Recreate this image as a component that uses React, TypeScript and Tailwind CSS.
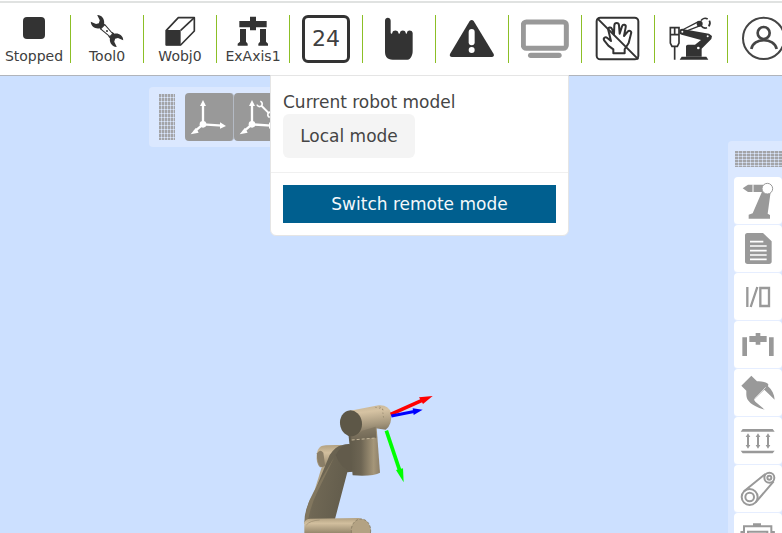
import type { ReactNode } from "react";

const DARK = "#333333";
const GREY = "#999999";

/* ---------- status bar icons ---------- */

const StopIcon = () => (
  <svg viewBox="0 0 144 96" className="h-8 w-12 shrink-0" aria-hidden="true">
    <rect x="39" y="6" width="66" height="66" rx="12" fill={DARK} />
  </svg>
);

const ToolIcon = () => (
  <svg viewBox="0 0 144 96" className="h-8 w-12 shrink-0" aria-hidden="true">
    <g transform="translate(72 48) rotate(44)">
      <path
        d="M-54-14C-45-24-28-20-22-10L-14-9V9L-22 10C-28 20-45 24-54 14L-38 8-34 0-38-8z"
        fill={DARK}
      />
      <path
        d="M54-14C45-24 28-20 22-10L14-9V9L22 10C28 20 45 24 54 14L38 8 34 0 38-8z"
        fill={DARK}
      />
      <path d="M-18-9L18-6V6L-18 9z" fill="#fff" stroke={DARK} strokeWidth="3" />
      <circle cx="0" cy="0" r="3" fill={DARK} />
    </g>
  </svg>
);

const WobjIcon = () => (
  <svg viewBox="0 0 144 96" className="h-8 w-12 shrink-0" aria-hidden="true">
    <path d="M31 46L67 8h48v40L74 90H31z" fill="#fff" stroke={DARK} strokeWidth="5" strokeLinejoin="round" />
    <path d="M29 45h45v46H29z" fill={DARK} />
    <path d="M74 46l41-38" stroke={DARK} strokeWidth="5" />
  </svg>
);

const AxisIcon = () => (
  <svg viewBox="0 0 144 96" className="h-8 w-12 shrink-0" aria-hidden="true">
    <path
      d="M63 5h18v13h32v19H81v9H63v-9H31V18h32zM33 42h18v38l5 6v6H26v-6l7-6zM93 42h18v38l6 6v6H88v-6l5-6z"
      fill={DARK}
    />
  </svg>
);

const HandIcon = () => (
  <svg viewBox="0 0 144 144" className="size-12" aria-hidden="true">
    <path
      d="M30 17c0-12 17-12 17 0v36c0 4 5 4 5 0 1-9 17-9 18 0 0 4 5 4 5 0 1-9 16-9 17 0 0 4 4 4 4 0 1-9 16-8 17 1v54c0 8-2 14-6 20-3 5-8 6-14 6H53c-8 0-15-2-19-8-3-5-4-9-4-17z"
      fill={DARK}
    />
  </svg>
);

const WarningIcon = () => (
  <svg viewBox="0 0 144 144" className="size-12" aria-hidden="true">
    <path d="M65 18q6-6 12 0l60 99q3 8-6 9H12q-9-1-6-9z" fill={DARK} />
    <rect x="62" y="42" width="18" height="49" rx="9" fill="#fff" />
    <circle cx="71" cy="105" r="9" fill="#fff" />
  </svg>
);

const MonitorIcon = () => (
  <svg viewBox="0 0 144 144" className="size-12" aria-hidden="true">
    <rect x="7" y="21" width="129" height="79" rx="9" fill="#fff" stroke={GREY} strokeWidth="15" />
    <rect x="21" y="113" width="101" height="16" rx="8" fill={GREY} />
  </svg>
);

const NoTouchIcon = () => (
  <svg viewBox="0 0 144 144" className="size-12" aria-hidden="true">
    <rect x="8" y="8" width="125" height="125" rx="11" fill="none" stroke={DARK} strokeWidth="6" />
    <path
      d="M58 115V103L43 92 31 77C26 69 34 64 40 69L51 78 43 46C41 37 51 34 54 42L60 58 61 31C62 22 74 22 75 31L77 56 84 34C87 26 97 29 95 37L90 63 101 50C106 44 114 49 111 56L104 84 92 103V115z"
      fill="none"
      stroke={DARK}
      strokeWidth="6"
      strokeLinejoin="round"
    />
    <path d="M10 10l123 123" stroke={DARK} strokeWidth="6" />
  </svg>
);

const RobotIcon = () => (
  <svg viewBox="0 0 144 144" className="size-12" aria-hidden="true">
    <g fill="none" stroke={DARK} strokeWidth="5">
      <path d="M10 38h26v46l-5 10H15l-5-10zM10 59h26M23 38v21M23 94v40" />
      <path d="M40 48l56-29M48 52l52-20" strokeWidth="4" />
    </g>
    <path d="M46 42L126 56 135 63 133 72 104 101V125H57V92L62 89H84L102 75 44 59z" fill={DARK} />
    <path d="M44 125H118L124 134H38z" fill={DARK} />
    <circle cx="46" cy="50" r="9" fill={DARK} />
    <circle cx="98" cy="26" r="9" fill={DARK} />
    <circle cx="122" cy="64" r="3" fill="#fff" />
    <circle cx="94" cy="99" r="4" fill="#fff" />
    <circle cx="46" cy="50" r="3" fill="#fff" />
    <path
      d="M102 17A15 15 0 0 1 122 12M127 17A15 15 0 0 1 125 34M120 38A15 15 0 0 1 103 33"
      fill="none"
      stroke={DARK}
      strokeWidth="5"
    />
  </svg>
);

const UserIcon = () => (
  <svg viewBox="0 0 144 144" className="size-12" aria-hidden="true">
    <g fill="none" stroke="#454545" strokeWidth="6">
      <circle cx="71" cy="70" r="62" />
      <circle cx="71" cy="54" r="18" strokeWidth="8" />
      <path d="M34 102c6-35 69-35 76 0" strokeWidth="8" />
    </g>
  </svg>
);

/* ---------- side toolbar icons ---------- */

const ArmIcon = () => (
  <svg viewBox="0 0 144 144" className="size-12" aria-hidden="true">
    <path d="M26 34l16-11h46v22H42z" fill={GREY} />
    <path d="M57 22v24" stroke="#fff" strokeWidth="3" />
    <path d="M84 44h26l-9 66 7 4v11H44v-12l12-4z" fill={GREY} />
    <circle cx="100" cy="35" r="16" fill="#fff" stroke={GREY} strokeWidth="3" />
  </svg>
);

const DocumentIcon = () => (
  <svg viewBox="0 0 144 144" className="size-12" aria-hidden="true">
    <path d="M40 24h47l26 25v60q0 8-8 8H41q-8 0-8-8V32q0-8 7-8z" fill={GREY} />
    <path d="M48 50h40M48 63h50M48 77h50M48 90h50M48 103h50" stroke="#fff" strokeWidth="5" />
  </svg>
);

const IoIcon = () => (
  <svg viewBox="0 0 144 144" className="size-12" aria-hidden="true">
    <path d="M40 42v60M50 102L70 42M79 45h26v54H79z" fill="none" stroke={GREY} strokeWidth="7" />
  </svg>
);

const SideAxisIcon = () => (
  <svg viewBox="0 0 144 144" className="size-12" aria-hidden="true">
    <path d="M25 49h14v56H25zM105 49h14v56h-14zM46 45h19v-9h14v9h19v18H79v8H65v-8H46z" fill={GREY} />
  </svg>
);

const GripperIcon = () => (
  <svg viewBox="0 0 144 144" className="size-12" aria-hidden="true">
    <path
      d="M22 50L52 20 69 37C82 36 97 39 103 46L102 52C114 62 121 76 122 92L91 62 60 92 64 98 92 122C72 116 54 108 46 98L41 92C36 84 37 74 37 65z"
      fill={GREY}
    />
    <path d="M95 55l-33 34" stroke="#fff" strokeWidth="2" />
  </svg>
);

const ConveyorIcon = () => (
  <svg viewBox="0 0 144 144" className="size-12" aria-hidden="true">
    <path d="M26 36h90l6 8H20zM20 101h102l-6 8H26z" fill={GREY} />
    <path d="M42 55v34M72 55v34M102 55v34" stroke={GREY} strokeWidth="6" />
    <path
      d="M35 60l7-11 7 11zM65 60l7-11 7 11zM95 60l7-11 7 11zM35 84l7 11 7-11zM65 84l7 11 7-11zM95 84l7 11 7-11z"
      fill={GREY}
    />
  </svg>
);

const BeltIcon = () => (
  <svg viewBox="0 0 144 144" className="size-12" aria-hidden="true">
    <g fill="none" stroke={GREY} strokeWidth="6">
      <circle cx="47" cy="96" r="24" />
      <circle cx="47" cy="96" r="13" />
      <circle cx="106" cy="38" r="15" />
      <circle cx="106" cy="38" r="6" />
      <path d="M30 79l64-52M65 112l54-63" />
    </g>
  </svg>
);

const ClipboardIcon = () => (
  <svg viewBox="0 0 144 144" className="size-12" aria-hidden="true">
    <path d="M30 144V40h82v104M20 58h10M112 58h10" fill="none" stroke={GREY} strokeWidth="6" />
    <path d="M57 31h24v10H57zM20 54h8v40h-8zM114 54h8v40h-8z" fill={GREY} />
    <path d="M42 56h58v40H42z" fill="none" stroke={GREY} strokeWidth="6" />
  </svg>
);

/* ---------- coordinate system icons ---------- */

const Axes = () => (
  <g>
    <path d="M54 94V36M54 94l58 4M54 94l-26 22" stroke="#fff" strokeWidth="7" />
    <path d="M45 39l9-18 9 18zM105 88l18 11-18 8zM33 104l-16 20 24-5z" fill="#fff" />
    <circle cx="54" cy="94" r="10" fill="#fff" />
  </g>
);

const BaseFrameIcon = () => (
  <svg viewBox="0 0 144 144" className="size-12" aria-hidden="true">
    <Axes />
  </svg>
);

const ToolFrameIcon = () => (
  <svg viewBox="0 0 144 144" className="size-12" aria-hidden="true">
    <Axes />
    <g transform="translate(93 49) rotate(45)">
      <path d="M-16 0H16" stroke="#fff" strokeWidth="6" />
      <path d="M-27-7a8 8 0 1 1 0 14M27-7a8 8 0 1 0 0 14" fill="none" stroke="#fff" strokeWidth="5" />
    </g>
  </svg>
);

/* ---------- layout pieces ---------- */

function Cell({ icon, label, name }: { icon: ReactNode; label?: string; name: string }) {
  return (
    <li className="h-12 w-[73px] shrink-0 border-r border-[#8cbf26]">
      <button
        type="button"
        aria-label={label ? undefined : name}
        className="flex w-full flex-col items-center whitespace-nowrap text-sm leading-[18px] text-[#404040]"
      >
        {icon}
        {label}
      </button>
    </li>
  );
}

function Grip({ id, className, w, h }: { id: string; className: string; w: number; h: number }) {
  return (
    <svg className={className} aria-hidden="true">
      <pattern id={id} width={w} height={h} patternUnits="userSpaceOnUse">
        <rect width={w} height={h} fill="#c6cedd" />
        <rect width={w - 1} height={h - 1} fill="#a3a4a8" />
        <rect width="1" height="1" x={w - 1} y={h - 1} fill="#dbe8ff" />
      </pattern>
      <rect width="100%" height="100%" fill={`url(#${id})`} />
    </svg>
  );
}

const SIDE_TOOLS: { name: string; icon: ReactNode }[] = [
  { name: "Robot", icon: <ArmIcon /> },
  { name: "Program", icon: <DocumentIcon /> },
  { name: "Digital signals", icon: <IoIcon /> },
  { name: "External axis", icon: <SideAxisIcon /> },
  { name: "Gripper", icon: <GripperIcon /> },
  { name: "Force sensor", icon: <ConveyorIcon /> },
  { name: "Conveyor", icon: <BeltIcon /> },
  { name: "Records", icon: <ClipboardIcon /> },
];

function RobotModel() {
  return (
    <svg viewBox="0 0 450 444" className="absolute left-[295px] top-[309px] h-[148px] w-[150px]" role="img" aria-label="Robot arm model">
      <defs>
        <linearGradient id="head" x1="0" y1="0" x2="0.15" y2="1">
          <stop offset="0" stopColor="#c4b293" />
          <stop offset="0.25" stopColor="#d6c3a3" />
          <stop offset="0.65" stopColor="#a3957b" />
          <stop offset="1" stopColor="#6a6251" />
        </linearGradient>
        <linearGradient id="wrist">
          <stop offset="0" stopColor="#5f5949" />
          <stop offset="0.4" stopColor="#6d6553" />
          <stop offset="0.8" stopColor="#a59679" />
          <stop offset="1" stopColor="#8d8069" />
        </linearGradient>
        <linearGradient id="link" x1="0" y1="0" x2="1" y2="0.25">
          <stop offset="0" stopColor="#857a62" />
          <stop offset="0.35" stopColor="#6f6754" />
          <stop offset="1" stopColor="#605a4a" />
        </linearGradient>
        <linearGradient id="base" x1="0" y1="0" x2="0" y2="1">
          <stop offset="0" stopColor="#b2a181" />
          <stop offset="0.35" stopColor="#d2bf9e" />
          <stop offset="1" stopColor="#94866b" />
        </linearGradient>
      </defs>
      <path d="M78 184q8-5 62-4l10 60-75 7q-12-12-10-38 2-18 13-25z" fill="url(#base)" />
      <path d="M66 205q-2 32 15 42l10-2-6-42q-10-12-19 2z" fill="#8a7e67" />
      <path d="M80 247l32-10-56 88z" fill="#b5a587" />
      <path d="M140 181q28-10 45 4l-12 75-16 2-37 140-92 14q0-50 28-90l48-116q17-25 36-29z" fill="url(#link)" />
      <path d="M118 216l-62 104q-24 40-27 95l9-2q8-50 28-90z" fill="#82775f" />
      <path d="M122 210q15 42 51 50v-78q-28-12-51 28z" fill="#625b4b" />
      <path d="M160 145l84-30 11 148q-20 12-82 8z" fill="url(#wrist)" />
      <path d="M165 77l86-16q30-2 37 23 4 36-16 50l-30-4 2 28-72 4q-14-40-7-85z" fill="url(#head)" />
      <path d="M166 152l18-1 18-14 40-12 1 34-74 7z" fill="#7a705b" opacity=".6" />
      <path d="M170 165l72-6" stroke="#c5b79b" strokeWidth="3" strokeDasharray="9 6" />
      <ellipse cx="168" cy="115" rx="33" ry="39" fill="#5d5747" transform="rotate(-8 168 115)" />
      <path d="M241 67l21 4 4 30M254 65l14 12" fill="none" stroke="#877a62" strokeWidth="2" strokeDasharray="4 7" />
      <path d="M28 412q4-10 18-11l145-2q29 4 36 34v12H28z" fill="url(#base)" />
      <path d="M34 420q10-13 40-15" fill="none" stroke="#9b8c70" strokeWidth="2" />
      <ellipse cx="198" cy="436" rx="29" ry="34" fill="#b3a283" stroke="#776c56" strokeWidth="2" strokeDasharray="8 5" />
      <path d="M287 88l94-42" stroke="#f00" strokeWidth="11" />
      <path d="M372 37l41-4-29 24z" fill="#f00" />
      <path d="M289 93l72-14" stroke="#00f" strokeWidth="9" />
      <path d="M353 70l30 4-27 16z" fill="#00f" />
      <path d="M274 137l41 122" stroke="#0f0" strokeWidth="11" />
      <path d="M303 255l21-5 2 42z" fill="#0f0" />
    </svg>
  );
}

function ModePopover() {
  return (
    <section
      aria-label="Robot mode"
      className="absolute -top-px left-[270px] w-[299px] rounded-b-md border border-[#e5e5e5] bg-white text-[17px] leading-6 text-[#454545]"
    >
      <div className="border-b border-[#f0f0f0] px-3 pb-3.5 pt-3.5">
        <p>Current robot model</p>
        <output className="block w-[132px] rounded-md bg-[#f4f4f4] py-2.5 text-center">Local mode</output>
      </div>
      <div className="p-3">
        <button type="button" className="block w-full bg-[#005f8f] py-[7px] text-center text-[#f4f8fb]">
          Switch remote mode
        </button>
      </div>
    </section>
  );
}

export default function App() {
  return (
    <div className="flex h-screen flex-col overflow-hidden bg-white font-['DejaVu_Sans',Verdana,sans-serif]">
      <header className="border-b border-[#b0b4bb] pt-px">
        <div className="h-0.5 bg-[#e0e2e1]" />
        <ul className="-ml-0.5 flex overflow-hidden py-3">
          <Cell name="State" icon={<StopIcon />} label="Stopped" />
          <Cell name="Tool" icon={<ToolIcon />} label="Tool0" />
          <Cell name="Work object" icon={<WobjIcon />} label="Wobj0" />
          <Cell name="External axis" icon={<AxisIcon />} label="ExAxis1" />
          <Cell
            name="Speed"
            icon={
              <span className="flex size-12 items-center justify-center rounded-md border-3 border-[#333] text-[22px]">
                24
              </span>
            }
          />
          <Cell name="Manual mode" icon={<HandIcon />} />
          <Cell name="Warnings" icon={<WarningIcon />} />
          <Cell name="Display" icon={<MonitorIcon />} />
          <Cell name="Drag disabled" icon={<NoTouchIcon />} />
          <Cell name="Robot" icon={<RobotIcon />} />
          <Cell name="Account" icon={<UserIcon />} />
        </ul>
      </header>

      <main className="relative grow bg-[#cce0ff]">
        <RobotModel />

        <div className="absolute left-[149px] top-[11px] flex items-center rounded-sm bg-[#dbe8ff] py-1.5 pl-2.5 pr-1.5">
          <Grip id="grip-v" className="mr-2.5 h-[46px] w-4" w={3} h={4} />
          <button type="button" aria-label="Base frame" className="rounded-sm border-r border-[#b4bac4] bg-[#999]">
            <BaseFrameIcon />
          </button>
          <button type="button" aria-label="Tool frame" className="rounded-sm bg-[#999]">
            <ToolFrameIcon />
          </button>
        </div>

        <nav
          aria-label="Tools"
          className="absolute -right-1.5 top-[65px] flex w-[60px] flex-col items-start rounded-sm bg-[#dbe8ff] px-1.5 pt-2.5"
        >
          <Grip id="grip-h" className="mb-2.5 ml-px h-4 w-[47px]" w={4} h={3} />
          {SIDE_TOOLS.map((tool) => (
            <button
              key={tool.name}
              type="button"
              aria-label={tool.name}
              className="h-12 w-12 overflow-hidden rounded-sm border-b border-[#e6eeff] bg-white"
            >
              {tool.icon}
            </button>
          ))}
        </nav>

        <ModePopover />
      </main>
    </div>
  );
}
